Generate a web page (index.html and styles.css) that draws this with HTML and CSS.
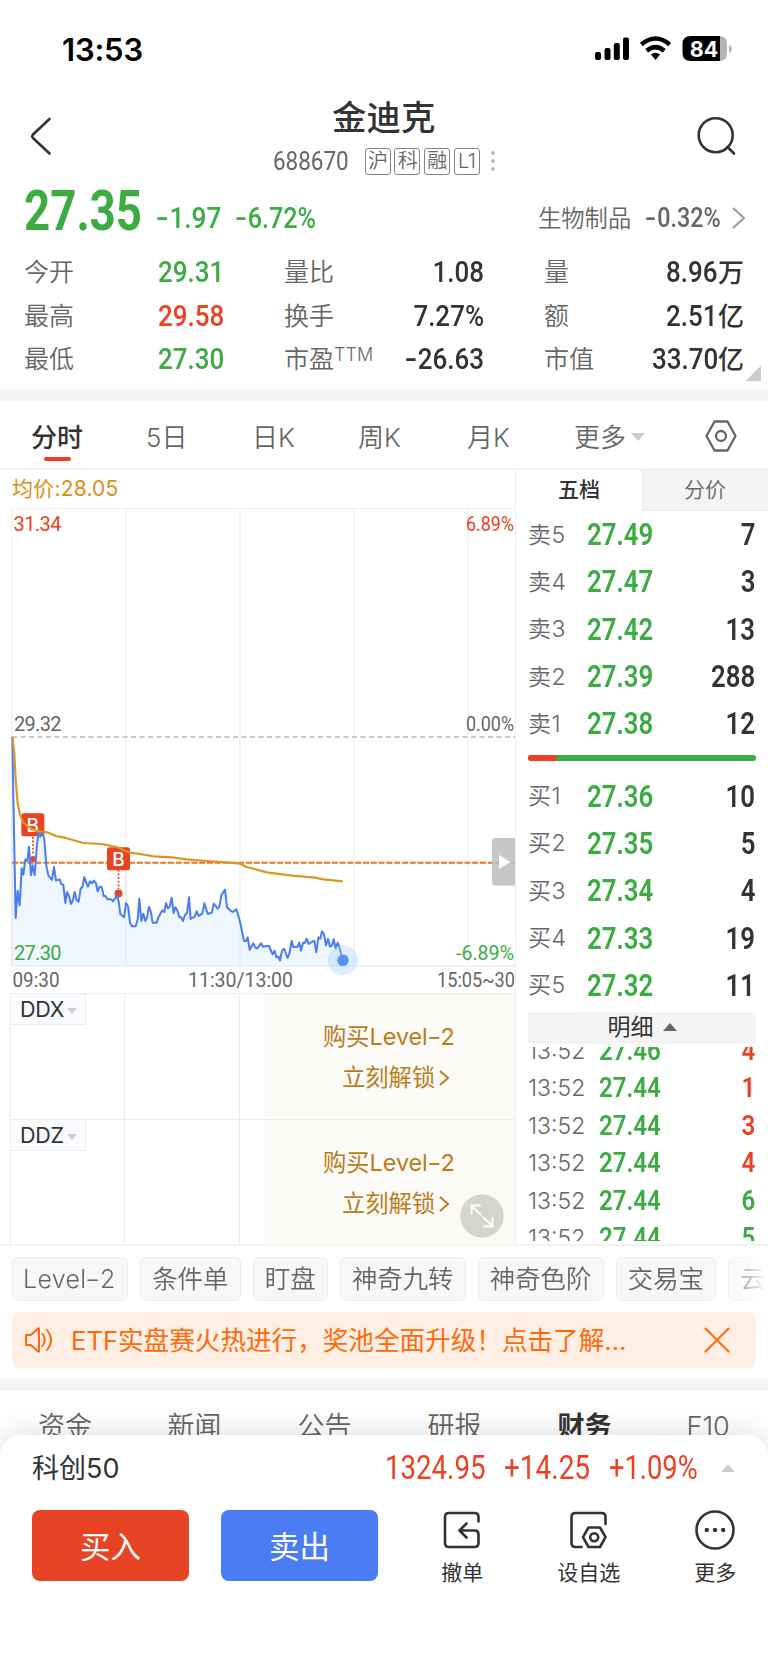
FILE: index.html
```html
<!DOCTYPE html>
<html lang="zh-CN">
<head>
<meta charset="utf-8">
<title>金迪克 688670</title>
<link rel="stylesheet" href="styles.css">
</head>
<body>
<div class="phone">
  <div class="status">
    <span class="clock">13:53</span>
    <svg class="status-icons" width="138" height="28" viewBox="594 35 138 28">
      <g fill="#000"><rect x="595" y="52" width="6" height="8" rx="2"/><rect x="604.500" y="48" width="6" height="12" rx="2"/><rect x="613.800" y="43" width="6" height="17" rx="2"/><rect x="623" y="37.500" width="6" height="22.500" rx="2"/></g>
      <g fill="none" stroke="#000" stroke-width="4.400"><path d="M641.300 44.500Q655.500 32.500 669.700 44.500"/><path d="M646.700 50.800Q655.500 43.500 664.300 50.800"/></g>
      <path d="M651 54.500Q655.500 51 660 54.500L655.500 60Z"/>
      <path d="M716 36h3q8 0 8 8v9q0 8-8 8h-3z" fill="#b3b3b3"/>
      <path d="M720 36h-29q-8.500 0-8.500 8v9q0 8 8.500 8h29z"/>
      <path d="M729 45q3 1.300 3 4t-3 4z" fill="#b3b3b3"/>
      <text class="battery-text" x="704" y="56.500" text-anchor="middle">84</text>
    </svg>
  </div>

  <header class="header">
    <svg class="back" width="26" height="44" viewBox="28 114 26 44"><path d="M49.500 119L33 134.500Q31.500 136.200 33 138L49.500 153.500"/></svg>
    <div class="title-block">
      <h1>金迪克</h1>
      <div class="code-row">
        <span class="n code">688670</span>
        <span class="badge">沪</span><span class="badge">科</span><span class="badge">融</span><span class="badge">L1</span>
        <span class="dots"><i></i><i></i><i></i></span>
      </div>
    </div>
    <svg class="search" width="44" height="44" viewBox="694 114 44 44"><circle cx="715.700" cy="135.200" r="17"/><path d="M727.500 147L734 153.500"/></svg>
  </header>

  <section class="quote">
    <span class="n price">27.35</span>
    <span class="n change"><i class="minus">-</i>1.97</span>
    <span class="n change pct"><i class="minus">-</i>6.72%</span>
    <span class="industry">生物制品</span>
    <span class="n ind-pct"><i class="minus">-</i>0.32%</span>
    <svg class="chev" width="16" height="24" viewBox="0 0 16 24"><path d="M2 2L13 12L2 22"/></svg>
  </section>

  <section class="stats">
    <span>今开</span><b class="n l green">29.31</b><span>量比</span><b class="n r">1.08</b><span class="c3">量</span><b class="r"><em class="n r">8.96</em>万</b>
    <span>最高</span><b class="n l red">29.58</b><span>换手</span><b class="n r">7.27%</b><span class="c3">额</span><b class="r"><em class="n r">2.51</em>亿</b>
    <span>最低</span><b class="n l green">27.30</b><span>市盈<sup>TTM</sup></span><b class="n r"><i class="minus">-</i>26.63</b><span class="c3">市值</span><b class="r"><em class="n r">33.70</em>亿</b>
    <i class="corner"></i>
  </section>
  <div class="band"></div>

  <nav class="tabs">
    <span class="active">分时</span><span>5日</span><span>日K</span><span>周K</span><span>月K</span><span class="more">更多<i></i></span>
    <svg width="34" height="34" viewBox="0 0 34 34"><path d="M10.500 2.500h13L31.500 17l-8 14.500h-13L2.500 17z"/><circle cx="17" cy="17" r="5"/></svg>
  </nav>

  <main class="market">
    <div class="chart-col">
      <div class="avg">均价:28.05</div>
      <svg class="chart" width="515" height="486" viewBox="0 507 515 486">
        <g stroke="#efefef" stroke-width="1.200" fill="none"><path d="M12 508.500H515M12 966H515M12 508V966M126 508V966M240 508V966M354 508V966M468 508V966"/></g>
        <g transform="translate(0 720) scale(.33333)">
          <path fill="#eff6fe" d="M37 736V52L47 594 53 512 59 556 65 445 70 464 76 418 82 424 87 380 93 466 98 436 104 466 110 385 116 333 121 350 127 335 133 358 139 436 145 466 156 480 162 441 168 482 179 478 184 492 190 495 196 549 201 516 207 528 213 552 219 540 224 516 230 541 236 545 242 505 247 502 253 471 259 488 264 500 270 484 276 490 282 482 288 490 293 514 299 500 305 500 311 528 316 528 322 538 333 538 339 544 345 536 351 526 356 545 361 582 372 592 378 549 384 558 390 608 396 619 407 619 413 598 418 536 424 603 430 581 436 603 441 592 447 560 453 578 458 608 470 608 476 590 487 571 493 576 498 550 504 565 509 560 515 533 521 579 526 562 532 571 538 592 544 592 549 603 555 585 561 580 567 532 572 597 584 590 590 574 596 588 607 580 613 550 619 570 624 582 636 577 641 551 647 558 653 566 658 560 664 526 675 509 681 562 692 572 698 576 709 568 715 587 721 610 732 663 738 663 743 652 749 689 760 670 766 683 772 685 783 670 789 680 801 678 807 678 818 703 824 692 829 712 835 709 840 722 846 692 852 686 863 714 869 697 875 662 880 681 892 681 898 668 903 692 909 668 915 668 920 656 926 672 932 668 943 662 949 697 955 652 961 656 966 634 972 642 978 676 984 656 990 680 996 676 1001 658 1007 686 1013 668 1018 680 1028 720V736Z"/>
        </g>
        <path d="M12 966H515M12 737V966M126 865V966M240 920V966" stroke="#e3e9f1" stroke-width="1.200"/>
        <path d="M12 737H515" stroke="#b8b8b8" stroke-width="1.400" stroke-dasharray="5 3.500"/>
        <text class="red" x="13.500" y="530.500" textLength="48">31.34</text>
        <text class="red" x="466" y="530.500" textLength="48" lengthAdjust="spacingAndGlyphs">6.89%</text>
        <text x="14" y="730.500" textLength="47.500">29.32</text>
        <text x="466" y="730.500" textLength="48" lengthAdjust="spacingAndGlyphs">0.00%</text>
        <text class="green" x="14" y="959.500" textLength="47.500">27.30</text>
        <text class="green" x="456" y="959.500" textLength="58" lengthAdjust="spacingAndGlyphs">-6.89%</text>
        <path d="M12 862.700H515" stroke="#fd6e17" stroke-width="2" stroke-dasharray="6 1.800"/>
        <path d="M33 837V855M118.500 870V889" stroke="#e94325" stroke-width="1.800" stroke-dasharray="1.800 1.800"/>
        <g fill="#e94325"><rect x="21.300" y="813.300" width="23" height="23" rx="2.500"/><rect x="107" y="847.300" width="23" height="23" rx="2.500"/><circle cx="33" cy="859" r="3"/><circle cx="118.500" cy="893.500" r="4"/></g>
        <text class="mark" x="32.800" y="831.600" text-anchor="middle">B</text><text class="mark" x="118.500" y="865.600" text-anchor="middle">B</text>
        <g transform="translate(0 720) scale(.33333)" fill="none" stroke-linejoin="round">
          <path stroke="#4a7df0" stroke-width="6" d="M37 52L40 230 47 594 53 512 59 556 65 445 70 464 76 418 82 424 87 380 93 466 98 436 104 466 110 385 116 333 121 350 127 335 133 358 139 436 145 466 156 480 162 441 168 482 179 478 184 492 190 495 196 549 201 516 207 528 213 552 219 540 224 516 230 541 236 545 242 505 247 502 253 471 259 488 264 500 270 484 276 490 282 482 288 490 293 514 299 500 305 500 311 528 316 528 322 538 333 538 339 544 345 536 351 526 356 545 361 582 372 592 378 549 384 558 390 608 396 619 407 619 413 598 418 536 424 603 430 581 436 603 441 592 447 560 453 578 458 608 470 608 476 590 487 571 493 576 498 550 504 565 509 560 515 533 521 579 526 562 532 571 538 592 544 592 549 603 555 585 561 580 567 532 572 597 584 590 590 574 596 588 607 580 613 550 619 570 624 582 636 577 641 551 647 558 653 566 658 560 664 526 675 509 681 562 692 572 698 576 709 568 715 587 721 610 732 663 738 663 743 652 749 689 760 670 766 683 772 685 783 670 789 680 801 678 807 678 818 703 824 692 829 712 835 709 840 722 846 692 852 686 863 714 869 697 875 662 880 681 892 681 898 668 903 692 909 668 915 668 920 656 926 672 932 668 943 662 949 697 955 652 961 656 966 634 972 642 978 676 984 656 990 680 996 676 1001 658 1007 686 1013 668 1018 680 1028 720"/>
          <path stroke="#dc951f" stroke-width="6.500" d="M37 52L43 100 47 180 53 250 60 285 70 308 85 320 105 332 145 338 168 348 195 353 250 369 305 372 350 381 390 398 440 405 460 409 515 412 560 418 620 423 680 427 720 431 740 441 800 457 875 467 945 473 970 478 1028 484"/>
        </g>
        <circle cx="343" cy="960.300" r="15" fill="#9fcdfb" opacity=".35"/><circle cx="343" cy="960.300" r="5.800" fill="#5b8ff5"/>
        <path d="M515 838H495q-3 0-3 3V882.500q0 3 3 3H515Z" fill="#bdbdbd" opacity=".85"/><path d="M499 855L510.500 862L499 869Z" fill="#fff"/>
        <g class="axis"><text x="12.500" y="987" textLength="47" lengthAdjust="spacingAndGlyphs">09:30</text><text x="188" y="987" textLength="105" lengthAdjust="spacingAndGlyphs">11:30/13:00</text><text x="437" y="987" textLength="78" lengthAdjust="spacingAndGlyphs">15:05~30</text></g>
      </svg>
      <div class="sub"><span class="tag">DDX<i></i></span><div class="lock"><span>购买Level<u>-</u>2</span><span class="go">立刻解锁<svg width="11" height="18" viewBox="0 0 11 18"><path d="M1 2L9 9L1 16"/></svg></span></div></div>
      <div class="sub"><span class="tag">DDZ<i></i></span><div class="lock"><span>购买Level<u>-</u>2</span><span class="go">立刻解锁<svg width="11" height="18" viewBox="0 0 11 18"><path d="M1 2L9 9L1 16"/></svg></span></div>
        <svg class="expand" width="44" height="44" viewBox="0 0 44 44"><circle cx="22" cy="22" r="21.700" fill="#d5d4cf" stroke="none"/><path d="M20.500 20.500L11.500 12M11.500 20V11.500H20M23.500 23.500L32.500 32M24 32.500H32.500V24"/></svg>
      </div>
    </div>

    <aside class="book">
      <div class="book-tabs"><span class="on">五档</span><span>分价</span></div>
      <div class="levels sell">
        <div><span>卖5</span><b class="n l green">27.49</b><b class="n r">7</b></div>
        <div><span>卖4</span><b class="n l green">27.47</b><b class="n r">3</b></div>
        <div><span>卖3</span><b class="n l green">27.42</b><b class="n r">13</b></div>
        <div><span>卖2</span><b class="n l green">27.39</b><b class="n r">288</b></div>
        <div><span>卖1</span><b class="n l green">27.38</b><b class="n r">12</b></div>
      </div>
      <div class="ratio"><i></i></div>
      <div class="levels buy">
        <div><span>买1</span><b class="n l green">27.36</b><b class="n r">10</b></div>
        <div><span>买2</span><b class="n l green">27.35</b><b class="n r">5</b></div>
        <div><span>买3</span><b class="n l green">27.34</b><b class="n r">4</b></div>
        <div><span>买4</span><b class="n l green">27.33</b><b class="n r">19</b></div>
        <div><span>买5</span><b class="n l green">27.32</b><b class="n r">11</b></div>
      </div>
      <div class="detail-head">明细<i></i></div>
      <div class="ticks">
        <div><span>13:52</span><b class="n l green">27.46</b><b class="n r red">4</b></div>
        <div><span>13:52</span><b class="n l green">27.44</b><b class="n r red">1</b></div>
        <div><span>13:52</span><b class="n l green">27.44</b><b class="n r red">3</b></div>
        <div><span>13:52</span><b class="n l green">27.44</b><b class="n r red">4</b></div>
        <div><span>13:52</span><b class="n l green">27.44</b><b class="n r green">6</b></div>
        <div><span>13:52</span><b class="n l green">27.44</b><b class="n r green">5</b></div>
      </div>
    </aside>
  </main>

  <div class="chips"><span>Level<u>-</u>2</span><span>条件单</span><span>盯盘</span><span>神奇九转</span><span>神奇色阶</span><span>交易宝</span><span>云</span></div>

  <div class="banner">
    <svg width="30" height="28" viewBox="0 0 30 28"><path d="M2 9h4q1 0 2-1l6-5.500q1-.5 1 .5v22q0 1-1 .5l-6-5.500q-1-1-2-1H2z"/><path d="M18.500 8q4.500 6 0 12M23 4q8 10 0 20"/></svg>
    <span>ETF实盘赛火热进行，奖池全面升级！点击了解...</span>
    <svg class="close" width="26" height="26" viewBox="0 0 26 26"><path d="M1.500 1.500L24.500 24.500M24.500 1.500L1.500 24.500"/></svg>
  </div>
  <div class="band low"></div>
  <nav class="info-tabs"><span>资金</span><span>新闻</span><span>公告</span><span>研报</span><span class="on">财务</span><span>F10</span></nav>

  <footer class="sheet">
    <div class="index"><span class="index-name">科创50</span><span class="n i1">1324.95</span><span class="n i2">+14.25</span><span class="n i3">+1.09%</span><i></i></div>
    <div class="actions">
      <button class="buy-btn">买入</button><button class="sell-btn">卖出</button>
      <div class="act"><svg width="42" height="42" viewBox="0 0 42 42"><path d="M37.500 12.500V8q0-4-4-4H8Q4 4 4 8v26q0 4 4 4h25.500q4 0 4-4v-8.500q0-4-4-4H19.500M25.500 14.500L18.500 21.500l7 7"/></svg><span>撤单</span></div>
      <div class="act"><svg width="42" height="42" viewBox="0 0 42 42"><path d="M37.500 15V8q0-4-4-4H7.500q-4 0-4 4v26q0 4 4 4h6"/><path d="M20.500 18.500h11.500L37.500 28.200 32 38h-11.500L15 28.200z"/><circle cx="26.200" cy="28.200" r="4"/></svg><span>设自选</span></div>
      <div class="act"><svg width="42" height="42" viewBox="0 0 42 42"><circle cx="21" cy="21" r="18.500"/><g fill="#333" stroke="none"><circle cx="12.800" cy="21" r="2.200"/><circle cx="21" cy="21" r="2.200"/><circle cx="29.200" cy="21" r="2.200"/></g></svg><span>更多</span></div>
    </div>
  </footer>
</div>
</body>
</html>
```
FILE: styles.css
```css
* { box-sizing: border-box; }
body { margin: 0; background: #fff; font-family: Inter, "Noto Sans CJK SC", sans-serif; color: #333; }
i, em { font-style: normal; }
u { text-decoration: none; display: inline-block; transform: scaleX(1.35); margin: 0 1px; }
svg { flex: none; }
.phone { width: 768px; height: 1663px; overflow: hidden; display: flex; flex-direction: column; }
.phone > * { flex: none; }
.green { color: #3cab43; fill: #3cab43; }
.red { color: #ee3f22; fill: #ee3f22; }

.n { display: inline-block; font-family: Roboto, sans-serif; font-weight: 500; transform: scaleX(.88); transform-origin: left center; white-space: nowrap; }
.n.r { transform-origin: right center; text-align: right; }
.minus { display: inline-block; transform: scaleX(1.4); margin: 0 3px 0 2px; }

.status { height: 92px; padding: 35px 36px 0 62px; display: flex; justify-content: space-between; align-items: flex-start; }
.clock { font-size: 31px; line-height: 29px; font-weight: 600; color: #000; letter-spacing: -.2px; }
.battery-text { font: 700 21.500px Inter, sans-serif; fill: #fff; }

.header { height: 91px; padding: 0 30px 0 28px; display: flex; justify-content: space-between; }
.header svg { margin-top: 22px; fill: none; stroke: #333; stroke-width: 2.600; stroke-linecap: round; }
.title-block { flex: 1; display: flex; flex-direction: column; padding-left: 219px; }
h1 { margin: 5px 0 0; height: 42px; line-height: 41px; font-size: 34.500px; font-weight: 500; padding-left: 59px; }
.code-row { display: flex; align-items: center; height: 44px; gap: 3.700px; margin-top: 0; color: #666; }
.code { font-size: 25.500px; font-weight: 450; width: 88px; }
.badge { width: 26px; height: 27px; border: 1.500px solid #858585; border-radius: 3px; font-size: 20px; line-height: 24px; text-align: center; font-weight: 350; white-space: nowrap; letter-spacing: -.5px; }
.dots { display: grid; gap: 4px; margin-left: 8px; }
.dots i { width: 4px; height: 4px; border-radius: 2px; background: #bbb; }

.quote { height: 63px; padding-left: 24px; display: flex; align-items: flex-start; color: #3cab43; }
.price { font-size: 55px; line-height: 56px; font-weight: 700; width: 132px; transform: scaleX(.83); }
.change { font-size: 29.500px; line-height: 30px; width: 79px; margin-top: 20px; font-weight: 500; transform: scaleX(.89); }
.pct { width: 304px; transform: scaleX(.85); }
.industry { color: #666; font-size: 23.300px; line-height: 31px; width: 107px; margin: 20px 0 0 -1px; font-weight: 350; }
.ind-pct { color: #666; font-size: 27.500px; line-height: 30px; width: 86px; margin-top: 20px; transform: scaleX(.85); }
.chev { margin-top: 23px; fill: none; stroke: #999; stroke-width: 2; }

.stats { position: relative; height: 143px; padding: 5px 24px 0 24px; display: grid; grid-template-columns: 134px 126px 100px 100px 120px 140px; grid-auto-rows: 43.500px; align-items: center; }
.stats span { font-size: 25px; line-height: 43px; color: #666; font-weight: 350; white-space: nowrap; }
.stats .c3 { padding-left: 60px; }
.stats sup { font-size: 18px; line-height: 0; vertical-align: 7px; font-weight: 300; }
.stats b { font-size: 29.500px; line-height: 43px; font-weight: 500; }
.stats b.r { text-align: right; white-space: nowrap; }
.stats b:not(.n) { font-size: 26px; }
.stats em { font-size: 29.500px; }
.corner { position: absolute; right: 7px; bottom: 8px; width: 15px; height: 15px; background: linear-gradient(135deg, transparent 50%, #ccc 50%); }
.band { height: 12px; background: #f4f4f4; }

.tabs { height: 69px; border-bottom: 2px solid #f2f2f2; display: grid; grid-template-columns: 115px 106px 106px 109px 107px 130px 64px; padding: 2px 0 0 31px; align-items: center; font-size: 26px; color: #666; font-weight: 350; }
.tabs .active { color: #333; font-weight: 500; position: relative; }
.tabs .active::after { content: ""; position: absolute; left: 13px; top: 40px; width: 27px; height: 4px; border-radius: 2px; background: #ee3f22; }
.more i { display: inline-block; border: 7px solid transparent; border-top: 8px solid #ccc; border-bottom: 0; margin-left: 5px; vertical-align: 6px; }
.tabs svg { fill: none; stroke: #666; stroke-width: 2.300; stroke-linejoin: round; }

.market { height: 776px; display: flex; border-bottom: 2px solid #f2f2f2; }
.chart-col { width: 516px; border-right: 1.500px solid #efefef; }
.avg { height: 37px; padding-left: 12px; line-height: 38px; font-size: 21px; color: #da9018; font-weight: 400; letter-spacing: .2px; }
.chart { display: block; }
.chart text { font: 400 20px Roboto, sans-serif; fill: #666; }
.chart text.red { fill: #ee3f22; }
.chart text.green { fill: #3cab43; }
.chart text.mark { font: 500 19px Inter, sans-serif; fill: #fff; }
.chart .axis text { font-size: 21px; }
.sub { position: relative; height: 126px; margin-left: 10px; display: flex; justify-content: space-between; border: 1.500px solid #ececec; border-width: 1px 0 0 1px; background: linear-gradient(#ececec, #ececec) 113px 0 / 1px 100% no-repeat, linear-gradient(#ececec, #ececec) 228px 0 / 1px 100% no-repeat; }
.tag { width: 75px; height: 31px; background: #f9fbff; border: solid #e9ecf0; border-width: 0 1.500px 1.500px 0; padding-left: 9px; line-height: 31px; font-size: 21.500px; font-weight: 400; letter-spacing: -.3px; white-space: nowrap; }
.tag i { display: inline-block; border: 5px solid transparent; border-top: 6px solid #ccc; border-bottom: 0; margin-left: 3px; vertical-align: 3px; }
.lock { width: 251px; background: #fcfaf6; color: #ba7d1c; font-size: 23.300px; padding: 22px 0 0 59px; line-height: 41px; white-space: nowrap; }
.lock span { display: block; }
.lock .go { padding-left: 19px; }
.lock svg { margin-left: 4px; vertical-align: -1px; fill: none; stroke: #ba7d1c; stroke-width: 2; }
.expand { position: absolute; right: 11px; top: 74px; fill: none; stroke: #fff; stroke-width: 2; stroke-linecap: round; }

.book { width: 252px; }
.book-tabs { display: grid; grid-template-columns: 1fr 1fr; height: 39px; line-height: 40px; font-size: 21px; text-align: center; font-weight: 350; }
.book-tabs .on { font-weight: 500; background: #fff; }
.book-tabs span:last-child { background: #f4f4f4; color: #666; padding-right: 1px; border: solid #ececec; border-width: 0 0 1px 1px; }
.levels { padding: 2px 13px 0 12px; }
.levels div, .ticks div { display: grid; grid-template-columns: 59px 1fr auto; height: 47.300px; align-items: center; }
.levels span { font-size: 23px; line-height: 43px; color: #666; font-weight: 350; letter-spacing: .5px; padding-top: 1px; }
.levels b { font-size: 30.500px; line-height: 47px; }
.levels .n { transform: scaleX(.845); font-weight: 600; }
.ratio { margin: 8px 12px 0; height: 6px; border-radius: 3px; background: #3cab43; }
.ratio i { display: block; width: 29px; height: 6px; border-radius: 3px; background: #ee3f22; }
.levels.buy { padding-top: 11px; }
.detail-head { margin: 3px 12px 0; height: 32px; border-radius: 4px; background: #f4f4f4; text-align: center; font-size: 23px; line-height: 31px; font-weight: 400; }
.detail-head i { display: inline-block; border: 7px solid transparent; border-bottom: 8px solid #666; border-top: 0; margin-left: 9px; vertical-align: 4px; }
.ticks { margin: 3px 13px 0 12px; height: 194px; overflow: hidden; }
.ticks div { height: 37.500px; grid-template-columns: 71px 1fr auto; }
.ticks div:first-child { margin-top: -16px; }
.ticks span { font-size: 23px; line-height: 37px; font-weight: 350; color: #666; padding-top: 2px; }
.ticks b { font-size: 28.500px; line-height: 37px; }
.ticks .n { transform: scaleX(.845); font-weight: 600; }

.chips { height: 66px; padding: 11px 0 0 12px; display: flex; gap: 12px; overflow: hidden; -webkit-mask-image: linear-gradient(90deg, #000 720px, transparent 768px); mask-image: linear-gradient(90deg, #000 720px, transparent 768px); }
.chips span { flex: none; height: 44px; padding: 0 11.200px; border: 1.500px solid #ebebeb; border-radius: 6px; background: #f7f7f7; color: #666; font-size: 25.400px; line-height: 42px; font-weight: 350; white-space: nowrap; }
.chips span:first-child { width: 116px; font-size: 25px; padding-left: 10px; letter-spacing: .3px; }
.chips span:last-child { width: 60px; }
.banner { margin: 0 12px; height: 56px; border-radius: 8px; background: #ffeee3; display: flex; align-items: center; color: #ff6a0b; font-size: 25.600px; padding: 0 26px 0 12px; font-weight: 400; white-space: nowrap; }
.banner span { margin: -3px 0 0 17px; }
.banner svg { fill: none; stroke: #ff6a0b; stroke-width: 2; stroke-linejoin: round; stroke-linecap: round; }
.banner .close { margin-left: auto; }
.low { margin-top: 11px; }
.info-tabs { height: 44px; padding-left: 38px; display: grid; grid-template-columns: 129.500px 130px 130px 130px 129px 60px; overflow: hidden; font-size: 27px; color: #666; font-weight: 350; line-height: 38px; padding-top: 17px; }
.info-tabs .on { color: #333; font-weight: 600; }
.sheet { position: relative; height: 228px; background: #fff; border-radius: 22px 22px 0 0; box-shadow: 0 -3px 32px rgba(0,0,0,.12); }
.index { height: 66px; padding: 0 32px; display: flex; align-items: center; color: #ee3f22; }
.index-name { font-size: 27px; color: #333; width: 353px; font-weight: 400; margin-top: -3px; }
.index .n { font-size: 32.500px; font-weight: 450; margin-top: -1px; }
.index .i1 { width: 119px; transform: scaleX(.85); }
.index .i2 { width: 105px; transform: scaleX(.86); }
.index .i3 { width: 112px; transform: scaleX(.84); }
.index i { border: 7.500px solid transparent; border-bottom: 8px solid #ccc; border-top: 0; }
.actions { display: flex; padding: 9px 0 0 32px; }
.actions button { flex: none; border: 0; width: 157px; height: 71px; border-radius: 8px; color: #fff; font: 400 30.500px Inter, "Noto Sans CJK SC", sans-serif; margin-right: 32px; padding: 0 0 2px; }
.buy-btn { background: #e94325; }
.sell-btn { background: #4a7cf3; }
.act { flex: none; width: 126.500px; display: flex; flex-direction: column; align-items: center; font-size: 21px; line-height: 43px; }
.act:nth-child(3) { margin-left: -11px; }
.act svg { fill: none; stroke: #333; stroke-width: 2.600; stroke-linecap: round; stroke-linejoin: round; margin-top: -1px; }
```
